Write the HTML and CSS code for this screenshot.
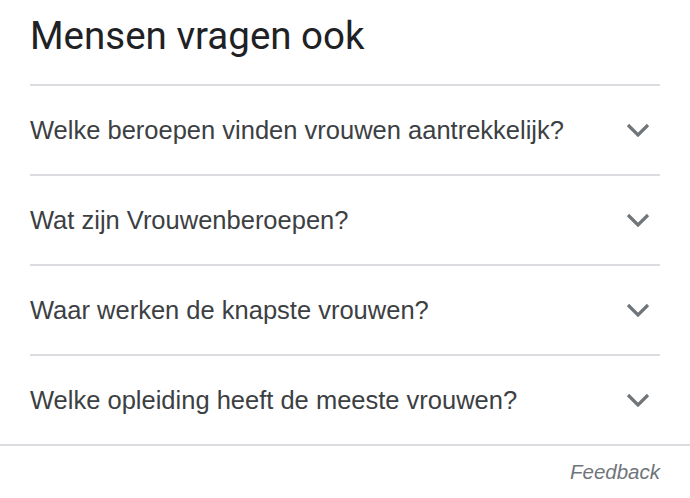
FILE: index.html
```html
<!DOCTYPE html>
<html lang="nl">
<head>
  <meta charset="UTF-8" />
  <meta name="viewport" content="width=device-width, initial-scale=1.0" />
  <title>Mensen vragen ook</title>
  <link rel="stylesheet" href="styles.css">
</head>
<body>
  <div class="paa">
    <h2 class="title">Mensen vragen ook</h2>
    <div class="questions">
      <div class="question">
        <span>Welke beroepen vinden vrouwen aantrekkelijk?</span>
        <svg class="chevron" viewBox="0 0 24 14"><path d="M2 2 L12 12 L22 2" /></svg>
      </div>
      <div class="question">
        <span>Wat zijn Vrouwenberoepen?</span>
        <svg class="chevron" viewBox="0 0 24 14"><path d="M2 2 L12 12 L22 2" /></svg>
      </div>
      <div class="question">
        <span>Waar werken de knapste vrouwen?</span>
        <svg class="chevron" viewBox="0 0 24 14"><path d="M2 2 L12 12 L22 2" /></svg>
      </div>
      <div class="question">
        <span>Welke opleiding heeft de meeste vrouwen?</span>
        <svg class="chevron" viewBox="0 0 24 14"><path d="M2 2 L12 12 L22 2" /></svg>
      </div>
    </div>
    <div class="footer">
      <span class="feedback">Feedback</span>
    </div>
  </div>
</body>
</html>
```

FILE: styles.css
```css
body {
  margin: 0;
  background: #fff;
  font-family: 'Liberation Sans', Arial, sans-serif;
}

.paa {
  width: 690px;
}

.title {
  margin: 0 30px;
  padding-top: 12px;
  height: 86px;
  box-sizing: border-box;
  font-family: Roboto, 'Liberation Sans', sans-serif;
  font-weight: 400;
  font-size: 38.5px;
  line-height: 48px;
  color: #202124;
  border-bottom: 2px solid #dadce0;
}

.question {
  display: flex;
  align-items: center;
  justify-content: space-between;
  margin: 0 30px;
  height: 90px;
  box-sizing: border-box;
  border-bottom: 2px solid #dadce0;
  font-size: 25.5px;
  color: #3c4043;
}

.question:last-child {
  margin: 0;
  padding: 0 30px;
}

.chevron {
  width: 24px;
  height: 14px;
  margin-right: 10px;
}

.chevron path {
  fill: none;
  stroke: #70757a;
  stroke-width: 3.2;
}

.footer {
  display: flex;
  justify-content: flex-end;
  padding: 14px 30px 0;
}

.feedback {
  font-style: italic;
  font-size: 20.5px;
  color: #70757a;
}
```
